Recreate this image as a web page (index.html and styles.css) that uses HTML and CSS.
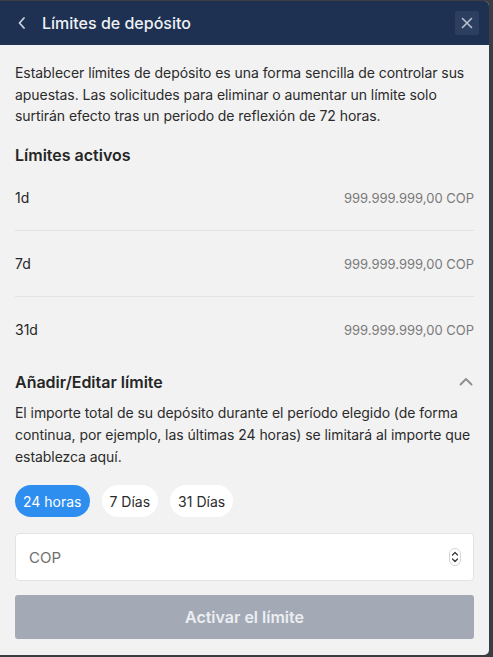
FILE: index.html
```html
<!DOCTYPE html>
<html lang="es">
<head>
<meta charset="utf-8">
<title>Límites de depósito</title>
<link rel="stylesheet" href="styles.css">
</head>
<body>
<div class="backdrop">
  <div class="modal">
    <header class="modal-header">
      <button class="back" aria-label="Volver">
        <svg width="10" height="14" viewBox="0 0 10 14"><path d="M7 2 L2.5 7 L7 12" fill="none" stroke="#c9d0dc" stroke-width="1.8" stroke-linecap="round" stroke-linejoin="round"/></svg>
      </button>
      <h1 class="title">Límites de depósito</h1>
      <button class="close" aria-label="Cerrar">
        <svg width="12" height="12" viewBox="0 0 12 12"><path d="M1.5 1.5 L10.5 10.5 M10.5 1.5 L1.5 10.5" stroke="#b7c0cf" stroke-width="1.6" stroke-linecap="round"/></svg>
      </button>
    </header>
    <div class="modal-body">
      <p class="text">Establecer límites de depósito es una forma sencilla de controlar sus apuestas. Las solicitudes para eliminar o aumentar un límite solo surtirán efecto tras un periodo de reflexión de 72 horas.</p>

      <h2 class="section-title">Límites activos</h2>
      <ul class="limits">
        <li class="limit-row"><span class="period">1d</span><span class="amount">999.999.999,00 COP</span></li>
        <li class="limit-row"><span class="period">7d</span><span class="amount">999.999.999,00 COP</span></li>
        <li class="limit-row"><span class="period">31d</span><span class="amount">999.999.999,00 COP</span></li>
      </ul>

      <div class="section-head">
        <h2 class="section-title">Añadir/Editar límite</h2>
        <svg class="chev" width="14" height="9" viewBox="0 0 14 9"><path d="M1.5 7.5 L7 2 L12.5 7.5" fill="none" stroke="#8d8f93" stroke-width="1.9" stroke-linecap="round" stroke-linejoin="round"/></svg>
      </div>
      <p class="text">El importe total de su depósito durante el período elegido (de forma continua, por ejemplo, las últimas 24 horas) se limitará al importe que establezca aquí.</p>

      <div class="pills">
        <button class="pill active">24 horas</button>
        <button class="pill">7 Días</button>
        <button class="pill">31 Días</button>
      </div>

      <div class="field">
        <input class="amount-input" type="text" placeholder="COP">
        <span class="spinner">
          <svg width="12" height="18" viewBox="0 0 12 18"><rect x="0.5" y="0.5" width="11" height="17" rx="5.5" fill="#fff" stroke="#d4d4d4"/><path d="M3.5 7 L6 4.5 L8.5 7 M3.5 11 L6 13.5 L8.5 11" fill="none" stroke="#333" stroke-width="1.2" stroke-linecap="round" stroke-linejoin="round"/></svg>
        </span>
      </div>

      <button class="submit" disabled>Activar el límite</button>
    </div>
  </div>
</div>
</body>
</html>
```

FILE: styles.css
```css
* { box-sizing: border-box; }
html, body { margin: 0; padding: 0; }
body {
  background: #3b3d42;
  font-family: Inter, "Noto Sans", "Liberation Sans", sans-serif;
  width: 493px;
  height: 657px;
  overflow: hidden;
}
.backdrop {
  padding-top: 1px;
  height: 657px;
}
.modal {
  width: 489px;
  height: 654px;
  background: #f2f2f2;
  border-radius: 0 5px 5px 0;
  overflow: hidden;
  display: flex;
  flex-direction: column;
}
.modal-header {
  height: 44px;
  background: #1e3152;
  display: flex;
  align-items: center;
  padding: 0 10px 0 14px;
  flex-shrink: 0;
}
.back {
  background: none;
  border: 0;
  padding: 0;
  width: 16px;
  height: 20px;
  display: flex;
  align-items: center;
  justify-content: center;
  margin-right: 12px;
}
.title {
  margin: 0;
  flex: 1;
  font-size: 16px;
  font-weight: 500;
  color: #eef1f6;
}
.close {
  width: 24px;
  height: 24px;
  border: 0;
  padding: 0;
  border-radius: 2px;
  background: #2d3f60;
  display: flex;
  align-items: center;
  justify-content: center;
}
.modal-body {
  padding: 17px 15px 0 15px;
  display: flex;
  flex-direction: column;
}
.text {
  margin: 0;
  font-size: 14px;
  line-height: 21.7px;
  color: #2b2b2b;
  letter-spacing: -0.06px;
}
.section-title {
  margin: 0;
  font-size: 16px;
  font-weight: 600;
  color: #262626;
  line-height: 20px;
}
.modal-body > .section-title {
  margin-top: 18px;
}
.limits {
  list-style: none;
  margin: 0;
  padding: 0;
}
.limit-row {
  height: 66px;
  display: flex;
  justify-content: space-between;
  align-items: center;
  border-bottom: 1px solid #e2e2e2;
}
.limit-row:last-child { border-bottom: 0; height: 65px; }
.period {
  font-size: 14px;
  color: #262626;
  font-weight: 400;
}
.amount {
  font-size: 13px;
  color: #7a7a7a;
}
.section-head {
  display: flex;
  align-items: center;
  justify-content: space-between;
  margin-top: 10px;
  margin-bottom: 10px;
  padding-right: 1px;
}
.chev { margin-top: -2px; }
.pills {
  display: flex;
  gap: 12px;
  margin-top: 18px;
}
.pill {
  height: 32px;
  padding: 0 8px;
  border-radius: 16px;
  border: 0;
  background: #ffffff;
  font-family: inherit;
  font-size: 14px;
  color: #2b2b2b;
}
.pill.active {
  background: #2e8ef0;
  color: #ffffff;
}
.field {
  position: relative;
  margin-top: 16px;
}
.amount-input {
  width: 100%;
  height: 48px;
  border: 1px solid #e3e3e3;
  border-radius: 4px;
  background: #fff;
  padding: 0 40px 0 13px;
  font-family: inherit;
  font-size: 15px;
  color: #333;
  outline: none;
}
.amount-input::placeholder { color: #6f6f6f; }
.spinner {
  position: absolute;
  right: 13px;
  top: 15px;
  display: flex;
}
.submit {
  margin-top: 14px;
  height: 44px;
  width: 100%;
  border: 0;
  border-radius: 3px;
  background: #a3aab6;
  color: #eceef2;
  font-family: inherit;
  font-size: 16px;
  font-weight: 600;
}
```
